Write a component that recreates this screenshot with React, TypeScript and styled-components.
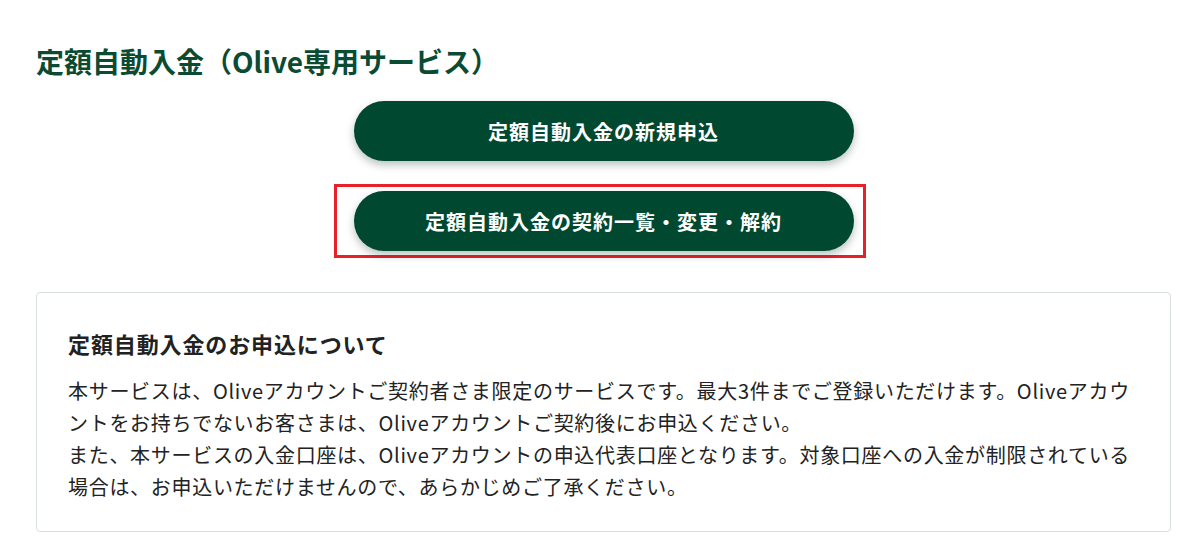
import React, { FunctionComponent } from "react"
import styled, { createGlobalStyle } from "styled-components"

const GlobalStyle = createGlobalStyle`
  html, body {
    margin: 0;
    padding: 0;
    background: #ffffff;
  }
  body {
    font-family: "Noto Sans CJK JP", "Noto Sans", sans-serif;
    color: #222222;
  }
`

interface ActionButtonProps {
  label: string
  highlighted?: boolean
}

const ActionButton: FunctionComponent<ActionButtonProps> = ({
  label,
  highlighted,
}) =>
  highlighted ? (
    <HighlightFrame>
      <PillButton type="button">{label}</PillButton>
    </HighlightFrame>
  ) : (
    <PillButton type="button">{label}</PillButton>
  )

export default function App() {
  return (
    <>
      <GlobalStyle />
      <Page>
        <PageTitle>定額自動入金（Olive専用サービス）</PageTitle>
        <ButtonColumn>
          <ActionButton label="定額自動入金の新規申込" />
          <ActionButton label="定額自動入金の契約一覧・変更・解約" highlighted />
        </ButtonColumn>
        <NoticeCard>
          <NoticeTitle>定額自動入金のお申込について</NoticeTitle>
          <NoticeText>
            本サービスは、Oliveアカウントご契約者さま限定のサービスです。最大3件までご登録いただけます。Oliveアカウントをお持ちでないお客さまは、Oliveアカウントご契約後にお申込ください。
            <br />
            また、本サービスの入金口座は、Oliveアカウントの申込代表口座となります。対象口座への入金が制限されている場合は、お申込いただけませんので、あらかじめご了承ください。
          </NoticeText>
        </NoticeCard>
      </Page>
    </>
  )
}

const Page = styled.div`
  display: flex;
  flex-direction: column;
  padding: 41px 29px 0 36px;
`

const PageTitle = styled.h1`
  margin: 0;
  font-size: 28px;
  line-height: 40px;
  font-weight: 700;
  color: #0b4a33;
`

const ButtonColumn = styled.div`
  display: flex;
  flex-direction: column;
  align-items: center;
  gap: 23px;
  margin-top: 20px;
`

const HighlightFrame = styled.div`
  display: flex;
  padding: 4px 9px 4px 17px;
  margin-left: -8px;
  border: 3px solid #e8202a;
`

const PillButton = styled.button`
  width: 500px;
  height: 60px;
  border: none;
  border-radius: 30px;
  background-color: #00482f;
  color: #ffffff;
  font-family: inherit;
  font-size: 20px;
  font-weight: 700;
  letter-spacing: 0.05em;
  box-shadow: 0 4px 8px rgba(0, 40, 25, 0.28);
  cursor: pointer;
`

const NoticeCard = styled.section`
  margin-top: 34px;
  padding: 34px 31px 28px;
  border: 1px solid #d9dfde;
  border-radius: 4px;
`

const NoticeTitle = styled.h2`
  margin: 0;
  font-size: 22px;
  line-height: 32px;
  font-weight: 700;
  letter-spacing: 0.04em;
  color: #222222;
`

const NoticeText = styled.p`
  margin: 16px 0 0;
  font-size: 20px;
  line-height: 32px;
  letter-spacing: 0.035em;
  color: #222222;
`
